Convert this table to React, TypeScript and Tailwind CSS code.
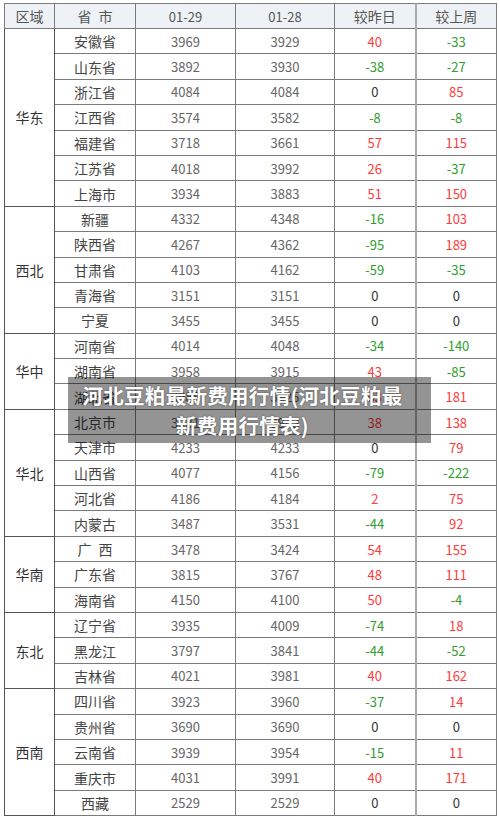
import React from "react";

type Row = [string, string, string, string, string];
type Group = { region: string; rows: Row[] };

const groups: Group[] = [
  {
    region: "华东",
    rows: [
      ["安徽省", "3969", "3929", "40", "-33"],
      ["山东省", "3892", "3930", "-38", "-27"],
      ["浙江省", "4084", "4084", "0", "85"],
      ["江西省", "3574", "3582", "-8", "-8"],
      ["福建省", "3718", "3661", "57", "115"],
      ["江苏省", "4018", "3992", "26", "-37"],
      ["上海市", "3934", "3883", "51", "150"],
    ],
  },
  {
    region: "西北",
    rows: [
      ["新疆", "4332", "4348", "-16", "103"],
      ["陕西省", "4267", "4362", "-95", "189"],
      ["甘肃省", "4103", "4162", "-59", "-35"],
      ["青海省", "3151", "3151", "0", "0"],
      ["宁夏", "3455", "3455", "0", "0"],
    ],
  },
  {
    region: "华中",
    rows: [
      ["河南省", "4014", "4048", "-34", "-140"],
      ["湖南省", "3958", "3915", "43", "-85"],
      ["湖北省", "3988", "3925", "63", "181"],
    ],
  },
  {
    region: "华北",
    rows: [
      ["北京市", "3981", "3943", "38", "138"],
      ["天津市", "4233", "4233", "0", "79"],
      ["山西省", "4077", "4156", "-79", "-222"],
      ["河北省", "4186", "4184", "2", "75"],
      ["内蒙古", "3487", "3531", "-44", "92"],
    ],
  },
  {
    region: "华南",
    rows: [
      ["广\u2002西", "3478", "3424", "54", "155"],
      ["广东省", "3815", "3767", "48", "111"],
      ["海南省", "4150", "4100", "50", "-4"],
    ],
  },
  {
    region: "东北",
    rows: [
      ["辽宁省", "3935", "4009", "-74", "18"],
      ["黑龙江", "3797", "3841", "-44", "-52"],
      ["吉林省", "4021", "3981", "40", "162"],
    ],
  },
  {
    region: "西南",
    rows: [
      ["四川省", "3923", "3960", "-37", "14"],
      ["贵州省", "3690", "3690", "0", "0"],
      ["云南省", "3939", "3954", "-15", "11"],
      ["重庆市", "4031", "3991", "40", "171"],
      ["西藏", "2529", "2529", "0", "0"],
    ],
  },
];

function Change({ v }: { v: string }) {
  const n = Number(v);
  if (n > 0) return <span className="text-[#ff3b3b]">{v}</span>;
  if (n < 0) return <span className="text-[#2f9e2f]">{v}</span>;
  return <span className="text-[#333]">{v}</span>;
}

const td = "border border-[#7a7a7a] text-center p-0";

export default function App() {
  return (
    <div
      className="relative w-[500px] h-[821px] bg-white pt-[3px] pl-[4px]"
      style={{ fontFamily: '"Noto Sans CJK SC", "Noto Sans", sans-serif' }}
    >
      <table className="border-collapse border border-[#555] table-fixed w-[492px] text-[13px] leading-none">
        <colgroup>
          <col className="w-[50px]" />
          <col className="w-[81px]" />
          <col className="w-[100px]" />
          <col className="w-[99px]" />
          <col className="w-[81px]" />
          <col className="w-[81px]" />
        </colgroup>
        <thead>
          <tr className="h-[25px] bg-[#eef2f6] text-[#555] text-[14px]">
            <th className={`${td} font-normal`}>区域</th>
            <th className={`${td} font-normal`}>省&ensp;市</th>
            <th className={`${td} font-normal text-[13px]`}>01-29</th>
            <th className={`${td} font-normal text-[13px]`}>01-28</th>
            <th className={`${td} font-normal`}>较昨日</th>
            <th className={`${td} font-normal border-l-2 border-l-[#aaa]`}>较上周</th>
          </tr>
        </thead>
        <tbody>
          {groups.map((g) =>
            g.rows.map((r, i) => (
              <tr key={g.region + r[0]} className="h-[25.4px]">
                {i === 0 && (
                  <td rowSpan={g.rows.length} className={`${td} text-[14px] text-[#333] border-[#555]`}>
                    {g.region}
                  </td>
                )}
                <td className={`${td} text-[14px] text-[#444]`}>{r[0]}</td>
                <td className={`${td} text-[#666]`}>{r[1]}</td>
                <td className={`${td} text-[#666]`}>{r[2]}</td>
                <td className={td}>
                  <Change v={r[3]} />
                </td>
                <td className={`${td} border-l-2 border-l-[#aaa]`}>
                  <Change v={r[4]} />
                </td>
              </tr>
            ))
          )}
        </tbody>
      </table>

      <div className="absolute left-[68px] top-[377px] w-[363px] h-[66px] bg-[rgba(0,0,0,0.42)] flex flex-col items-center justify-center pr-[14px]">
        <div
          className="text-white font-bold text-[20.5px] leading-[30px] text-center tracking-[0.3px]"
          style={{ textShadow: "0 0 2px rgba(0,0,0,0.5)" }}
        >
          <div>河北豆粕最新费用行情(河北豆粕最</div>
          <div>新费用行情表)</div>
        </div>
      </div>
    </div>
  );
}
